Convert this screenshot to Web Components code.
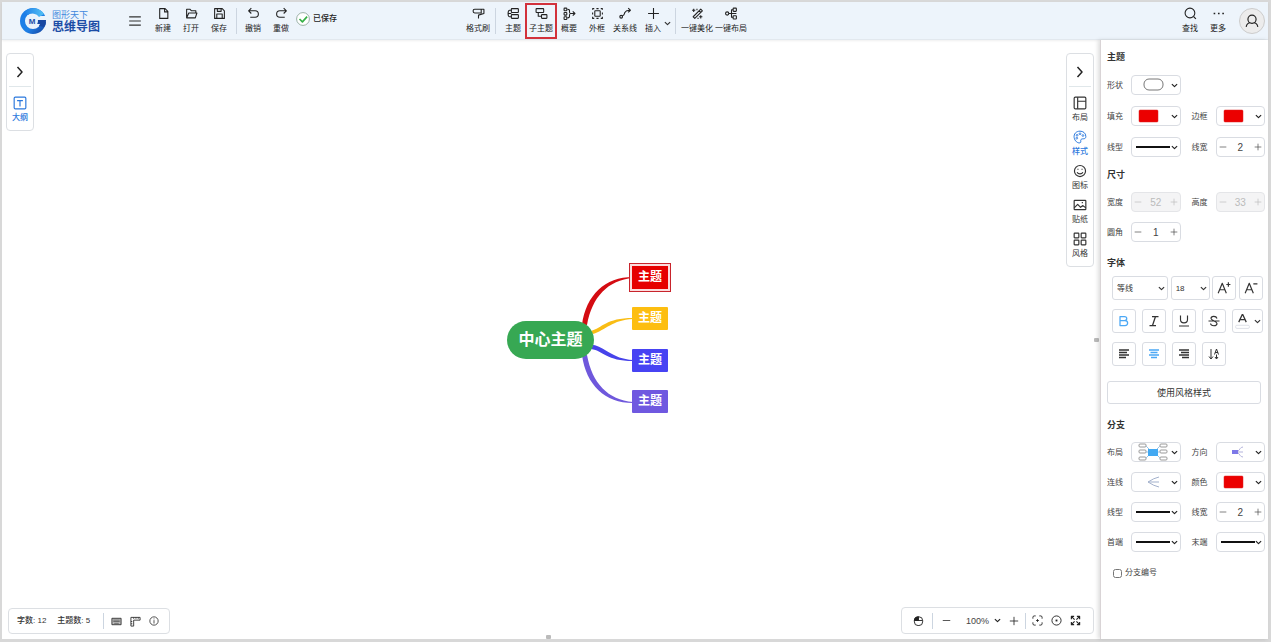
<!DOCTYPE html>
<html lang="zh-CN">
<head>
<meta charset="utf-8">
<title>思维导图</title>
<style>
html,body{height:100%;margin:0}
body{font-family:"Liberation Sans","Noto Sans CJK SC",sans-serif;color:#333;background:#fff}
</style>
</head>
<body>
<mm-app></mm-app>
<script>
const ICONS = {
  menu:'<path d="M2 5h20M2 12h20M2 19h20"/>',
  file:'<path d="M5 3h10l5 5v13H5zM14 3v6h6"/>',
  folder:'<path d="M3 20V4h6l3 3h8v4M3 20l4-9h15l-3 9z"/>',
  save:'<path d="M3 3h14l4 4v14H3zM7 21v-8h10v8M8 3v5h7V3"/>',
  undo:'<path d="M8 2L3 7l5 5M3 7h12c8 0 8 12 0 12H6"/>',
  redo:'<path d="M16 2l5 5-5 5M21 7H9c-8 0-8 12 0 12h9"/>',
  saved:'<circle cx="12" cy="12" r="11" stroke="#8fa79a" stroke-width="1.5" fill="#fff"/><path d="M6 12l5 5 8-9" stroke="#35b045" stroke-width="2.800"/>',
  brush:'<path d="M5 4h12v7H5c-4 0-4-7 0-7zM17 4h5v8l-10 3v6"/>',
  topic:'<rect x="8" y="3" width="13" height="7" rx="1"/><rect x="8" y="14" width="13" height="7" rx="1"/><path d="M8 6H5c-3 0-3 3-3 6s0 6 3 6h3M2 12h6"/>',
  subtopic:'<rect x="2" y="3" width="14" height="7" rx="1"/><rect x="12" y="14" width="10" height="7" rx="1"/><path d="M6 10v7h6"/>',
  summary:'<rect x="2" y="2" width="5" height="5" rx="1"/><rect x="2" y="10" width="5" height="5" rx="1"/><rect x="2" y="18" width="5" height="5" rx="1"/><path d="M8 4c5 0 4 3 4 5s0 3 2 3c-2 0-2 1-2 3s1 5-4 5M14 12h8M18 8l4 4-4 4"/>',
  frame:'<rect x="7" y="7" width="10" height="10" rx="1"/><path d="M3 5V3h3M10 3h4M18 3h3v2M21 10v4M21 18v3h-3M14 21h-4M6 21H3v-3M3 14v-4"/>',
  relation:'<circle cx="4" cy="18" r="2.500"/><path d="M6 16c5-1 3-3 5-6 2-4 5-4 10-4M17 2l4 4-4 4"/>',
  plus:'<path d="M12 2v20M2 12h20"/>',
  minus:'<path d="M2 12h20"/>',
  magic:'<path d="M4 18L18 4l3 3L7 21zM15 7l3 3M5 3v6M2 6h6M11 3v3M18 15v6M15 18h6M13 20v2"/>',
  autolay:'<circle cx="4" cy="12" r="3"/><rect x="15" y="2" width="6" height="6" rx="1"/><rect x="15" y="16" width="6" height="6" rx="1"/><path d="M7 12h5M15 5h-3v14h3M12 12h9"/>',
  search:'<circle cx="11" cy="11" r="9"/><path d="M18 18l4 4"/>',
  more:'<path d="M3 12h3M11 12h3M19 12h3" stroke-width="3"/>',
  user:'<circle cx="12" cy="9" r="7"/><path d="M2 22c1-5 4-7 7-7M22 22c-1-5-4-7-7-7"/>',
  right:'<path d="M7 2l9 10-9 10" stroke-width="3"/>',
  down:'<path d="M3 7l9 9 9-9" stroke-width="4"/>',
  outline:'<rect x="2" y="2" width="20" height="20" rx="2"/><path d="M7 8h10M12 8v10"/>',
  layout:'<rect x="2" y="2" width="20" height="20" rx="2"/><path d="M8 2v20M8 9h14"/>',
  palette:'<path d="M12 2C5 2 1 7 2 13s6 10 10 9c3-1 0-4 2-6s8 1 8-5-5-9-10-9z" stroke-width="1.700"/><g stroke-width="1.500"><circle cx="6.500" cy="14" r="1.500"/><circle cx="7" cy="9" r="1.500"/><circle cx="12" cy="6.500" r="1.500"/><circle cx="17" cy="9.500" r="1.500"/></g>',
  smile:'<circle cx="12" cy="12" r="9.500"/><path d="M7 14c2 4 8 4 10 0M8.500 8v2M15.500 8v2"/>',
  picture:'<rect x="2" y="4" width="20" height="16" rx="1"/><path d="M2 17l6-6 5 5 4-3 5 4M15 8h2"/>',
  blocks:'<rect x="2" y="2" width="8" height="8" rx="1"/><rect x="14" y="2" width="8" height="8" rx="1"/><rect x="2" y="14" width="8" height="8" rx="1"/><rect x="14" y="14" width="8" height="8" rx="1"/>',
  bigger:'<path d="M2 21L9 4l7 17M5 15h8M16 6h7M19.500 2v8"/>',
  smaller:'<path d="M2 21L9 4l7 17M5 15h8M16 5h7"/>',
  bold:'<path d="M4 3h9c6 0 6 8 0 8H4zM4 11h10c7 0 7 10 0 10H4z" stroke-width="2.500"/>',
  italic:'<path d="M8 3h13M3 21h13M15 3L9 21" stroke-width="2.500"/>',
  underline:'<path d="M5 1v8c0 9 14 9 14 0V1M2 22h20" stroke-width="2.300"/>',
  strike:'<path d="M18 7c-2-6-12-5-12 0 0 4 12 5 12 10 0 6-12 6-13 0M1 12h22" stroke-width="2.300"/>',
  color:'<path d="M6 13l6-13 6 13M8 9h8"/><rect x="1" y="18" width="22" height="5" rx="2" stroke="#dcdfe6" stroke-width="1.500"/>',
  aleft:'<path d="M2 4h20M2 9h16M2 14h20M2 19h14" stroke-width="3"/>',
  acenter:'<path d="M2 4h20M5 9h14M2 14h20M6 19h12" stroke-width="3"/>',
  aright:'<path d="M2 4h20M6 9h16M2 14h20M8 19h14" stroke-width="3"/>',
  vertical:'<path d="M6 2v19M2 17l4 5 4-5M13 13l4-11 4 11M14 9h6M17 13v8M14 18l3 4 3-4"/>',
  keyboard:'<rect x="2" y="5" width="20" height="14" fill="#bbb"/><path d="M5 9h14M5 12h14M7 16h10" stroke="#666"/>',
  ruler:'<path d="M2 3h20v6H8v13H2zM8 3v3M13 3v3M18 3v3M2 12h3M2 17h3"/>',
  info:'<circle cx="12" cy="12" r="10"/><path d="M12 10v8M12 6v2"/>',
  mouse:'<rect x="3" y="4" width="18" height="19" rx="8"/><path d="M12 4v8H3c0-5 3-8 9-8z" fill="currentColor"/><path d="M3 12h18"/>',
  fit:'<path d="M2 8V5c0-2 1-3 3-3h3M16 2h3c2 0 3 1 3 3v3M22 16v3c0 2-1 3-3 3h-3M8 22H5c-2 0-3-1-3-3v-3"/><path d="M9 12h6M12 9v6"/>',
  target:'<circle cx="12" cy="12" r="10"/><path d="M10 12h4" stroke-width="4"/>',
  expand:'<path d="M3 9V3h6M15 3h6v6M21 15v6h-6M9 21H3v-6M3 3l7 7M21 3l-7 7M21 21l-7-7M3 21l7-7" stroke-width="2.500"/>'
};

/* Pictures shown inside the drop-downs of the property panel */
const ART = {
  shape:'<rect x="12" y="4" width="19" height="11" rx="5" fill="#fff" stroke="#777"/>',
  red:'<rect x="7" y="4" width="19" height="12" rx="1" fill="#ec0000" stroke="#d22" stroke-width="0.500"/>',
  line:'<path d="M4 10h34" stroke="#111" stroke-width="2"/>',
  layout:'<g fill="none" stroke="#999"><rect x="7" y="2" width="7" height="3" rx="1"/><rect x="7" y="8" width="7" height="3" rx="1"/><rect x="7" y="15" width="7" height="3" rx="1"/><rect x="28" y="2" width="7" height="3" rx="1"/><rect x="28" y="8" width="7" height="3" rx="1"/><rect x="28" y="15" width="7" height="3" rx="1"/><path d="M14 4l4 4M14 10h14M14 16l4-4M28 4l-4 4M28 16l-4-4" stroke="#9cc4e4"/></g><rect x="16" y="7" width="10" height="7" fill="#42a9f2"/>',
  direction:'<rect x="15" y="8" width="6" height="4" fill="#7d78e8"/><path d="M21 9c2-1 2-4 5-4M21 10h5M21 11c2 1 2 4 5 4" fill="none" stroke="#b3b3dc"/>',
  link:'<path d="M27 5Q22 6 16 10Q22 14 27 15M16 10h11" fill="none" stroke="#a3b1cc"/>'
};

const define = (name, css, html, ready) => customElements.define(name, class extends HTMLElement {
  connectedCallback() {
    if (this.shadowRoot) return;
    const t = document.createElement('template');
    t.innerHTML = `<style>*{box-sizing:border-box}button,input,select{font:inherit;color:inherit;margin:0}${css}</style>` +
      (typeof html === 'function' ? html(k => this.getAttribute(k) || '') : html);
    this.attachShadow({mode: 'open'}).append(t.content.cloneNode(true));
    if (ready) ready(this);
  }
});

define('mm-icon', `:host{display:inline-flex;flex:none}svg{display:block;fill:none;stroke:currentColor;stroke-width:2;stroke-linejoin:round}`,
  a => `<svg width="${a('size') || 14}" height="${a('size') || 14}" viewBox="0 0 24 24" aria-hidden="true">${ICONS[a('name')]}</svg>`);

define('mm-logo', `
  :host{display:flex;align-items:center;gap:6px}
  svg{display:block}
  .sub{font-size:9px;line-height:12px;color:#4288dd}
  .main{font-size:12px;line-height:12px;font-weight:700;color:#1c4da6}`,
  `<svg width="26" height="26" viewBox="0 0 26 26" aria-hidden="true">
    <defs><linearGradient id="g" x1="0" y1="0" x2="1" y2="1"><stop offset="0" stop-color="#1d7ee8"/><stop offset="0.600" stop-color="#1f80e6"/><stop offset="1" stop-color="#174ba8"/></linearGradient>
    <linearGradient id="h" x1="0" y1="0" x2="1" y2="0"><stop offset="0" stop-color="#1d7ee8"/><stop offset="1" stop-color="#55c3f5"/></linearGradient></defs>
    <circle cx="13" cy="13" r="10.500" fill="none" stroke="url(#g)" stroke-width="5"/>
    <path d="M17 8h9v6h-9z" fill="#edf4fb"/>
    <path d="M4 4A13 13 0 0 1 24 6l-5 3A8 8 0 0 0 8 7z" fill="url(#h)"/>
    <path d="M15 12h11c0 4-1 6-2 7l-5-1 1-2h-5z" fill="#1748a2"/>
    <circle cx="12" cy="13" r="6" fill="#e8f3fc"/>
    <text x="12" y="16" text-anchor="middle" font-size="8" font-weight="700" fill="#1c4da6" font-family="Liberation Sans, sans-serif">M</text>
  </svg><div><div class="sub">图形天下</div><div class="main">思维导图</div></div>`);

define('mm-tool', `
  :host{display:block;flex:none;width:28px}
  :host([wide]){width:34px}
  button{display:flex;flex-direction:column;align-items:center;justify-content:center;gap:3px;width:100%;height:36px;padding:0;border:0;background:none;color:#222;font-size:8px;line-height:11px;white-space:nowrap}
  :host([active]){width:32px;margin:0 -2px}
  :host([active]) button{border:2px solid #d2313b}`,
  a => `<button type="button"><mm-icon name="${a('icon')}" size="13"></mm-icon><span><slot></slot></span></button>`);

define('mm-sep', `:host{display:block;flex:none;width:1px;height:26px;background:#ccd5e0}`, '');

define('mm-toolbar', `
  :host{display:grid;grid-template-columns:8fr auto 9fr;align-items:center;height:38px;background:#edf4fb;border-bottom:1px solid #e2e8ee;box-shadow:0 1px 2px #0001;position:relative}
  .g{display:flex;align-items:center}
  .left{padding-left:18px}
  .right{justify-content:flex-end;padding-right:3px}
  .menu{display:flex;margin:0 7px 0 28px;padding:0;border:0;background:none;color:#333}
  .left mm-sep{margin:0 2px 0 3px}
  .mid mm-sep{margin:0 4px}
  .mid .first{margin:0 3px}
  .state{display:flex;align-items:center;gap:3px;font-size:8px;line-height:12px;font-weight:500;color:#222;margin:-4px 0 0 1px}
  .chev{display:flex;padding:0;border:0;background:none;margin:6px 0 0 -3px}
  .user{display:flex;align-items:center;justify-content:center;width:26px;height:26px;margin-left:7px;padding:0;border:1px solid #ccc;border-radius:50%;background:#ececec;color:#222}`,
  `<div class="g left"><mm-logo></mm-logo>
    <button class="menu" type="button" aria-label="菜单"><mm-icon name="menu" size="14"></mm-icon></button>
    <mm-tool icon="file">新建</mm-tool><mm-tool icon="folder">打开</mm-tool><mm-tool icon="save">保存</mm-tool>
    <mm-sep></mm-sep><mm-tool icon="undo">撤销</mm-tool><mm-tool icon="redo">重做</mm-tool>
    <div class="state"><mm-icon name="saved" size="14"></mm-icon>已保存</div></div>
  <div class="g mid"><mm-tool icon="brush">格式刷</mm-tool><mm-sep class="first"></mm-sep>
    <mm-tool icon="topic">主题</mm-tool><mm-tool icon="subtopic" active>子主题</mm-tool><mm-tool icon="summary">概要</mm-tool><mm-tool icon="frame">外框</mm-tool><mm-tool icon="relation">关系线</mm-tool><mm-tool icon="plus">插入</mm-tool>
    <button class="chev" type="button" aria-label="更多插入"><mm-icon name="down" size="7"></mm-icon></button>
    <mm-sep></mm-sep><mm-tool icon="magic" wide>一键美化</mm-tool><mm-tool icon="autolay" wide>一键布局</mm-tool></div>
  <div class="g right"><mm-tool icon="search">查找</mm-tool><mm-tool icon="more">更多</mm-tool>
    <button class="user" type="button" aria-label="用户"><mm-icon name="user" size="14"></mm-icon></button></div>`);

define('mm-rail', `
  :host{display:block;width:28px;background:#fff;border:1px solid #dcdfe3;border-radius:4px;padding-bottom:6px}
  button{display:flex;align-items:center;justify-content:center;width:22px;height:33px;margin:0 auto 3px;padding:4px 0 0;border:0;border-bottom:1px solid #e0e7ea;background:none;color:#222}`,
  `<button type="button" aria-label="收起"><mm-icon name="right" size="12"></mm-icon></button><slot></slot>`);

define('mm-rail-item', `
  :host{display:block}
  button{display:flex;flex-direction:column;align-items:center;gap:3px;width:100%;height:34px;padding:6px 0 0;border:0;background:none;color:#333;font-size:8px;line-height:10px;white-space:nowrap}
  :host([active]) button{color:#2b78dd;font-weight:500}`,
  a => `<button type="button"><mm-icon name="${a('icon')}" size="14"></mm-icon><span><slot></slot></span></button>`);

define('mm-node', `
  :host{position:absolute;display:flex;align-items:center;justify-content:center;width:36px;height:23px;border-radius:1px;color:#fff;font-size:12px;line-height:16px;font-weight:700;white-space:nowrap}
  :host([selected]){border-radius:0;box-shadow:0 0 0 2px #fbdcdd,0 0 0 3px #c8242c}
  :host([root]){width:87px;height:38px;border-radius:19px;font-size:16px;line-height:22px}`, '<slot></slot>');

define('mm-map', `
  :host{position:absolute;left:calc(50% - 44px);top:calc(50% - 77px);width:166px;height:152px}
  svg{display:block}`,
  `<svg width="166" height="152" viewBox="507 263 166 152" aria-hidden="true">
    <path d="M582 325C586 295 605 277 633 277V278C608 280 592 297 587 325Z" fill="#d40c12"/>
    <path d="M591 331C602 328 606 318 633 318V319C612 320 606 330 593 334Z" fill="#f9bd14"/>
    <path d="M591 349C604 351 606 361 633 361V360C612 359 604 346 593 345Z" fill="#4743ea"/>
    <path d="M582 355C586 385 605 403 633 403V402C608 400 592 383 587 355Z" fill="#6f58dc"/>
  </svg>
  <mm-node root style="left:0;top:58px;background:#37a853">中心主题</mm-node>
  <mm-node selected style="left:125px;top:3px;background:#e60000">主题</mm-node>
  <mm-node style="left:125px;top:44px;background:#fdbe10">主题</mm-node>
  <mm-node style="left:125px;top:86px;background:#4743f3">主题</mm-node>
  <mm-node style="left:125px;top:127px;background:#6f58e0">主题</mm-node>`);

define('mm-status', `
  :host{display:flex;align-items:center;height:26px;padding:0 10px 0 8px;border:1px solid #dcdfe3;border-radius:4px;background:#fff;font-size:8px;line-height:12px;font-weight:500;color:#333;white-space:nowrap}
  .a{margin-right:11px}
  mm-sep{height:16px;margin:0 7px 0 13px}
  button{display:flex;padding:0;border:0;background:none;margin-right:8px}
  button:last-child{margin-right:0}`,
  `<span class="a">字数: 12</span><span>主题数: 5</span><mm-sep></mm-sep>
   <button type="button" aria-label="快捷键"><mm-icon name="keyboard" size="11"></mm-icon></button>
   <button type="button" aria-label="标尺"><mm-icon name="ruler" size="11"></mm-icon></button>
   <button type="button" aria-label="信息"><mm-icon name="info" size="10"></mm-icon></button>`);

define('mm-zoombar', `
  :host{display:flex;align-items:center;height:27px;padding:0 12px 0 11px;border:1px solid #dcdfe3;border-radius:4px;background:#fff;color:#222}
  button{display:flex;padding:0;border:0;background:none}
  mm-sep{height:16px}
  .z{display:grid;align-items:center;width:35px;margin:0 8px 0 15px}
  .z>*{grid-area:1/1}
  select{appearance:none;border:0;background:none;padding:0;width:100%;font-size:9px;line-height:14px;color:#444}
  .z mm-icon{justify-self:end;pointer-events:none}
  .m{margin-right:8px}.s{margin-left:9px}.p{margin-right:6px}.f{margin:0 8px 0 6px}.t{margin-right:8px}`,
  `<button class="m" type="button" aria-label="鼠标"><mm-icon name="mouse" size="11"></mm-icon></button><mm-sep></mm-sep>
   <button class="s" type="button" aria-label="缩小"><mm-icon name="minus" size="9"></mm-icon></button>
   <span class="z"><select aria-label="缩放"><option>100%</option></select><mm-icon name="down" size="7"></mm-icon></span>
   <button class="p" type="button" aria-label="放大"><mm-icon name="plus" size="10"></mm-icon></button><mm-sep></mm-sep>
   <button class="f" type="button" aria-label="适应"><mm-icon name="fit" size="11"></mm-icon></button>
   <button class="t" type="button" aria-label="居中"><mm-icon name="target" size="11"></mm-icon></button>
   <button type="button" aria-label="全屏"><mm-icon name="expand" size="11"></mm-icon></button>`);

const FIELD = `
  :host{display:grid;grid-template-columns:24px 1fr;align-items:center;height:20px}
  label{padding-top:2px;font-size:8px;line-height:12px;color:#444;white-space:nowrap}
  .box{display:grid;height:20px;border:1px solid #d9dce2;border-radius:4px;background:#fff}`;

define('mm-pick', FIELD + `
  .box{align-items:center}
  .box>*{grid-area:1/1}
  select{appearance:none;width:100%;height:18px;border:0;background:none;padding:0}
  svg,mm-icon{pointer-events:none}
  svg{display:block;margin:-1px 0}
  mm-icon{justify-self:end;margin-right:2px;color:#222}`,
  a => `<label for="c">${a('label')}</label><div class="box"><select id="c"><option value="${a('art')}"></option></select>
    <svg width="40" height="20" viewBox="0 0 40 20" aria-hidden="true">${ART[a('art')]}</svg><mm-icon name="down" size="7"></mm-icon></div>`);

define('mm-stepper', FIELD + `
  .box{grid-template-columns:12px 1fr 12px;align-items:center;color:#444}
  :host([off]) .box{background:#f4f4f5;border-color:#e4e5e8;color:#bbb}
  button{display:flex;align-items:center;justify-content:center;height:18px;padding:0;border:0;background:none}
  input{width:100%;min-width:0;height:18px;padding:0;border:0;background:none;text-align:center;font-size:10px}`,
  a => `<label for="c">${a('label')}</label><div class="box"><button type="button" aria-label="减"><mm-icon name="minus" size="8"></mm-icon></button>
    <input id="c" value="${a('value')}"><button type="button" aria-label="加"><mm-icon name="plus" size="8"></mm-icon></button></div>`,
  el => { if (el.hasAttribute('off')) el.shadowRoot.querySelector('input').readOnly = true; });

define('mm-select', `
  :host{display:grid;align-items:center;height:24px;border:1px solid #d9dce2;border-radius:3px;color:#333;box-sizing:border-box}
  select,mm-icon{grid-area:1/1}
  select{appearance:none;width:100%;height:22px;border:0;background:none;padding:0 4px;font-size:8px}
  mm-icon{justify-self:end;margin-right:2px;pointer-events:none}`,
  a => `<select aria-label="${a('label')}"><option>${a('value')}</option></select><mm-icon name="down" size="7"></mm-icon>`);

define('mm-square', `
  :host{display:block}
  button{display:flex;align-items:center;justify-content:center;gap:4px;width:100%;height:24px;padding:0;border:1px solid #d9dce2;border-radius:3px;background:#fff;color:#333}
  :host([on]) button{color:#4ba8f5}`,
  a => `<button type="button" aria-label="${a('label')}"><mm-icon name="${a('icon')}" size="${a('size') || 12}"></mm-icon><slot></slot></button>`);

define('mm-section', `
  :host{display:block}
  h2{margin:0 0 10px;font-size:9px;line-height:14px;font-weight:700;color:#333}
  .fields{display:grid;grid-template-columns:1fr 1fr;gap:10px 11px}
  :host([loose]) h2{margin-bottom:11px}
  :host([loose]) .fields{row-gap:11px}
  :host([stack]) h2{margin-bottom:6px}
  :host([stack]) .fields{display:block}`,
  a => `<h2>${a('heading')}</h2><div class="fields"><slot></slot></div>`);

define('mm-panel', `
  :host{display:flex;flex-direction:column;flex:none;width:168px;padding:10px 3px 0 6px;background:#fff;border-left:1px solid #d9d4d6;box-shadow:-2px 0 4px #0002;position:relative;box-sizing:border-box}
  mm-section+mm-section{margin-top:11px}
  mm-section.font{margin-top:14px}
  mm-section.branch{margin-top:14px}
  .row{display:grid;justify-content:space-between;margin:0 2px 9px 5px}
  .face{grid-template-columns:56px 39px 24px 24px}
  .style{grid-template-columns:24px 24px 24px 24px 31px}
  .apply{height:23px;margin:6px 4px 0 0;border:1px solid #d9dce2;border-radius:3px;background:#fff;font-size:9px;line-height:12px;color:#333}
  .num{display:flex;align-items:center;gap:3px;margin:14px 0 0 6px;font-size:8px;line-height:14px;color:#444}
  .num input{width:9px;height:9px;margin:0}`,
  `<mm-section heading="主题" loose>
    <mm-pick label="形状" art="shape"></mm-pick><span></span>
    <mm-pick label="填充" art="red"></mm-pick><mm-pick label="边框" art="red"></mm-pick>
    <mm-pick label="线型" art="line"></mm-pick><mm-stepper label="线宽" value="2"></mm-stepper>
  </mm-section>
  <mm-section heading="尺寸">
    <mm-stepper label="宽度" value="52" off></mm-stepper><mm-stepper label="高度" value="33" off></mm-stepper>
    <mm-stepper label="圆角" value="1"></mm-stepper>
  </mm-section>
  <mm-section class="font" heading="字体" stack>
    <div class="row face"><mm-select label="字体" value="等线"></mm-select><mm-select label="字号" value="18"></mm-select><mm-square icon="bigger" label="增大" size="14"></mm-square><mm-square icon="smaller" label="减小" size="14"></mm-square></div>
    <div class="row style"><mm-square icon="bold" label="加粗" on></mm-square><mm-square icon="italic" label="斜体"></mm-square><mm-square icon="underline" label="下划线"></mm-square><mm-square icon="strike" label="删除线"></mm-square><mm-square icon="color" label="文字颜色" size="15"><mm-icon name="down" size="7"></mm-icon></mm-square></div>
    <div class="row style"><mm-square icon="aleft" label="左对齐"></mm-square><mm-square icon="acenter" label="居中" on></mm-square><mm-square icon="aright" label="右对齐"></mm-square><mm-square icon="vertical" label="竖排"></mm-square></div>
  </mm-section>
  <button class="apply" type="button">使用风格样式</button>
  <mm-section class="branch" heading="分支">
    <mm-pick label="布局" art="layout"></mm-pick><mm-pick label="方向" art="direction"></mm-pick>
    <mm-pick label="连线" art="link"></mm-pick><mm-pick label="颜色" art="red"></mm-pick>
    <mm-pick label="线型" art="line"></mm-pick><mm-stepper label="线宽" value="2"></mm-stepper>
    <mm-pick label="首端" art="line"></mm-pick><mm-pick label="末端" art="line"></mm-pick>
  </mm-section>
  <label class="num"><input type="checkbox">分支编号</label>`);

define('mm-app', `
  :host{display:flex;flex-direction:column;box-sizing:border-box;min-height:100vh;border:solid #d8d8d8;border-width:2px 3px 3px 2px;background:#fff}
  .body{display:flex;flex:1}
  .canvas{flex:1;position:relative;display:grid;grid-template:1fr auto / auto 1fr auto;padding:13px 6px 5px 4px;overflow:hidden}
  .l,.r{align-self:start}
  .r{grid-column:3}
  .foot{grid-column:1/-1;display:flex;justify-content:space-between;align-items:flex-end;padding-left:2px}
  .grip{position:absolute;width:5px;height:4px;border-radius:1px;background:#bbb}
  .grip.v{right:1px;top:50%;margin-top:-2px}
  .grip.h{left:50%;bottom:0;margin-left:-5px}`,
  `<mm-toolbar></mm-toolbar>
  <div class="body"><main class="canvas">
    <mm-rail class="l"><mm-rail-item icon="outline" active>大纲</mm-rail-item></mm-rail>
    <mm-rail class="r"><mm-rail-item icon="layout">布局</mm-rail-item><mm-rail-item icon="palette" active>样式</mm-rail-item><mm-rail-item icon="smile">图标</mm-rail-item><mm-rail-item icon="picture">贴纸</mm-rail-item><mm-rail-item icon="blocks">风格</mm-rail-item></mm-rail>
    <div class="foot"><mm-status></mm-status><mm-zoombar></mm-zoombar></div>
    <mm-map></mm-map><i class="grip v"></i><i class="grip h"></i>
  </main><mm-panel></mm-panel></div>`);
</script>
</body>
</html>
